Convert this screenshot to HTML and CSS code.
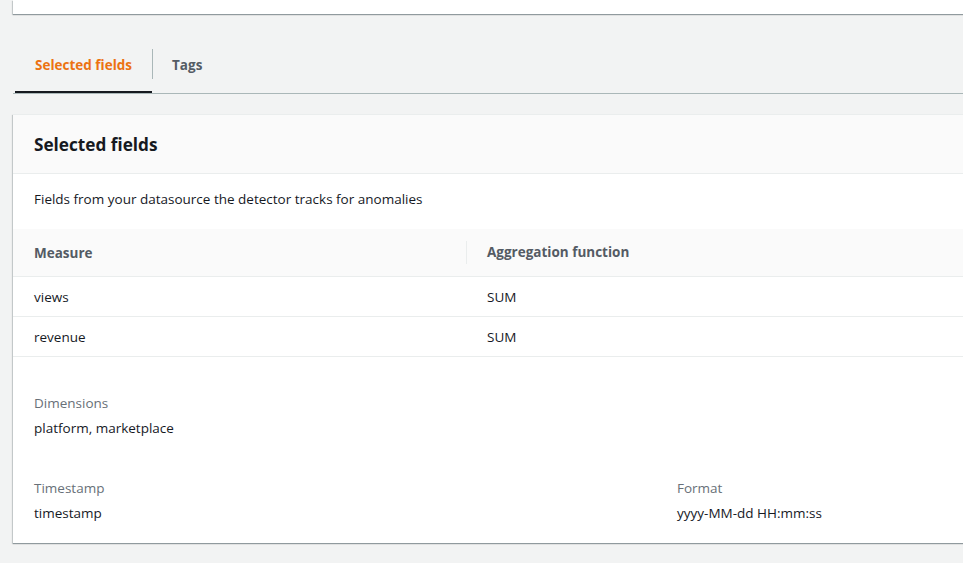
FILE: index.html
```html
<!DOCTYPE html>
<html>
<head>
<meta charset="utf-8">
<link rel="stylesheet" href="styles.css">
</head>
<body>
<div class="page">
  <div class="top-card"></div>
  <div class="tabs">
    <div class="tab active">Selected fields</div>
    <div class="tab">Tags</div>
  </div>
  <div class="card">
    <div class="card-header"><h2>Selected fields</h2></div>
    <div class="card-desc">Fields from your datasource the detector tracks for anomalies</div>
    <div class="table">
      <div class="thead">
        <div class="th">Measure</div>
        <div class="th th-div">Aggregation function</div>
      </div>
      <div class="tr"><div class="td">views</div><div class="td td-2">SUM</div></div>
      <div class="tr"><div class="td">revenue</div><div class="td td-2">SUM</div></div>
    </div>
    <div class="details">
      <div class="kv">
        <div class="label">Dimensions</div>
        <div class="value">platform, marketplace</div>
      </div>
      <div class="kv-row">
        <div class="kv">
          <div class="label">Timestamp</div>
          <div class="value">timestamp</div>
        </div>
        <div class="kv">
          <div class="label">Format</div>
          <div class="value">yyyy-MM-dd HH:mm:ss</div>
        </div>
      </div>
    </div>
  </div>
</div>
</body>
</html>
```

FILE: styles.css
```css
html, body {
  margin: 0;
  padding: 0;
}
body {
  background: #f2f3f3;
  font-family: "Open Sans", "Noto Sans", sans-serif;
  font-size: 13.5px;
  color: #16191f;
  overflow: hidden;
  width: 963px;
  height: 563px;
}
.page {
  padding-left: 13px;
  width: 1000px;
}
.top-card {
  height: 14px;
  background: #fff;
  box-shadow: 0 1px 1px 0 rgba(0, 28, 36, 0.3), -1px 1px 1px 0 rgba(0, 28, 36, 0.15);
}
.tabs {
  margin-top: 21px;
  display: flex;
  border-bottom: 1px solid #aab7b8;
  padding-left: 2px;
}
.tab {
  position: relative;
  height: 54px;
  padding: 2px 20px 0;
  line-height: 56px;
  font-size: 13.5px;
  font-weight: 700;
  color: #545b64;
  border-bottom: 2px solid transparent;
}
.tab.active {
  color: #ec7211;
  border-bottom-color: #16191f;
}
.tab + .tab::before {
  content: "";
  position: absolute;
  left: 0;
  top: 14px;
  height: 30px;
  border-left: 1px solid #aab7b8;
}
.card {
  margin-top: 20px;
  background: #fff;
  box-shadow: 0 1px 1px 0 rgba(0, 28, 36, 0.3), -1px 1px 1px 0 rgba(0, 28, 36, 0.15);
  border-top: 1px solid #eaeded;
}
.card-header {
  background: #fafafa;
  height: 58px;
  border-bottom: 1px solid #eaeded;
  padding: 0 21px;
  display: flex;
  align-items: center;
}
.card-header h2 {
  margin: 0;
  font-size: 17.2px;
  font-weight: 700;
  color: #16191f;
}
.card-desc {
  padding: 15px 21px 20px;
  line-height: 20px;
}
.thead {
  display: grid;
  grid-template-columns: 453px 1fr;
  background: #fafafa;
  height: 47px;
  border-bottom: 1px solid #eaeded;
  align-items: center;
}
.th {
  font-weight: 700;
  color: #545b64;
  padding-left: 21px;
}
.th-div {
  border-left: 1px solid #eaeded;
  height: 23px;
  line-height: 23px;
  padding-left: 20px;
}
.tr {
  display: grid;
  grid-template-columns: 453px 1fr;
  height: 39px;
  border-bottom: 1px solid #eaeded;
  align-items: center;
}
.td {
  padding-left: 21px;
}
.td-2 {
  padding-left: 21px;
}
.details {
  padding: 36px 21px 20px;
}
.kv-row {
  display: grid;
  grid-template-columns: 643px 1fr;
  margin-top: 40px;
}
.label {
  color: #687078;
  line-height: 20px;
}
.value {
  margin-top: 5px;
  line-height: 20px;
}
```
